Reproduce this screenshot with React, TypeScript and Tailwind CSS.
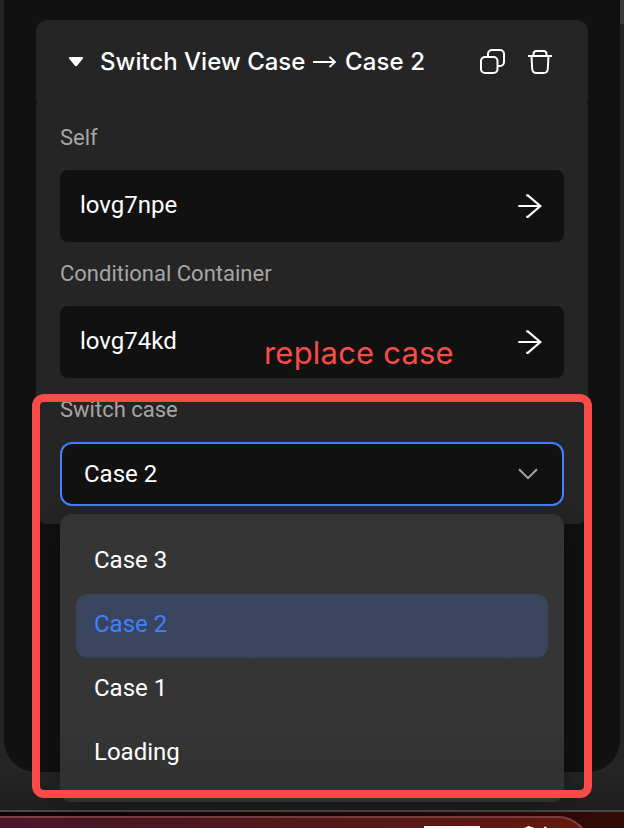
import type { ReactNode } from "react";

function ArrowRight() {
  return (
    <svg width="26" height="26" viewBox="0 0 26 26" fill="none" stroke="#fff" strokeWidth="2.2" strokeLinejoin="miter">
      <path d="M1.300 13H23.300M9.300 2.400H10.800L23.300 13 10.800 23.900H9.300" />
    </svg>
  );
}

function CopyIcon() {
  return (
    <svg className="-mt-px" width="25" height="25" viewBox="0 0 25 25" fill="none" stroke="#fff" strokeWidth="2">
      <rect x="1" y="8" width="16.500" height="16" rx="4" />
      <path d="M8 8V5A4 4 0 0 1 12 1H20A4 4 0 0 1 24 5V13A4 4 0 0 1 20 17H17.500" />
    </svg>
  );
}

function TrashIcon() {
  return (
    <svg width="24" height="24" viewBox="0 0 24 24" fill="none" stroke="#fff" strokeWidth="2">
      <path d="M0 6H24M5.500 6V4Q5.500 1 8.500 1H15.500Q18.500 1 18.500 4V6" />
      <path d="M3.500 6L4.200 19Q4.500 23 8.500 23H15.500Q19.500 23 19.800 19L20.500 6" />
    </svg>
  );
}

function Field({ label, children }: { label: string; children: ReactNode }) {
  return (
    <div className="h-[136px]">
      <div className="h-[50px] text-[22px] leading-[36px] text-[#a6a6a6]">{label}</div>
      {children}
    </div>
  );
}

function LinkInput({ value }: { value: string }) {
  return (
    <div className="flex h-[72px] items-center justify-between rounded-lg bg-[#111] pl-5 pr-[21px] text-[24px] text-white">
      <span className="-mt-[2px]">{value}</span>
      <ArrowRight />
    </div>
  );
}

const options = ["Case 3", "Case 2", "Case 1", "Loading"];

export default function App() {
  return (
    <div className="relative flex h-[828px] w-[624px] flex-col overflow-hidden bg-[#252525] font-[Roboto,sans-serif]">
      <div className="absolute right-0 top-0 h-6 w-1 bg-[#3b3b3b]" />
      <div className="mx-1 h-[772px] shrink-0 rounded-b-[32px] bg-[#111] px-8 pt-5">
        <section className="h-[504px] rounded-xl bg-[#252525]">
          <header className="relative flex h-[84px] items-center pl-8 pr-9 font-[Inter,sans-serif] text-[24px] font-medium text-white">
            <span className="absolute bottom-0 left-0 h-[2px] w-[2px] rounded-tr-full bg-[#161616]" />
            <span className="absolute bottom-0 right-0 h-[2px] w-[2px] rounded-tl-full bg-[#161616]" />
            <svg width="16" height="12" viewBox="0 0 16 12" fill="#fff">
              <path d="M2 1H14Q16 1 14.800 2.800L9.300 9.500Q8 11 6.700 9.500L1.200 2.800Q0 1 2 1Z" />
            </svg>
            <h1 className="ml-4 flex w-[330px] items-center whitespace-nowrap">
              <span className="w-[213px]">Switch View Case</span>
              <svg width="24" height="14" viewBox="0 0 24 14" fill="none" stroke="#fff" strokeWidth="1.8">
                <path d="M0 7H22M16.500 1.800L22 7 16.500 12.200" />
              </svg>
              <span className="ml-2 tracking-[0.1px]">Case 2</span>
            </h1>
            <div className="ml-auto flex items-center gap-[23px]">
              <CopyIcon />
              <TrashIcon />
            </div>
          </header>
          <div className="px-6 pt-4">
            <Field label="Self"><LinkInput value="lovg7npe" /></Field>
            <Field label="Conditional Container"><LinkInput value="lovg74kd" /></Field>
            <Field label="Switch case">
              <div className="flex h-16 items-center justify-between rounded-xl border-2 border-[#4080ff] bg-[#111] pl-[22px] pr-6 text-[24px] text-white">
                <span>Case 2</span>
                <svg width="20" height="12" viewBox="0 0 20 12" fill="none" stroke="#a6a6a6" strokeWidth="2">
                  <path d="M1 1.300L10 10.200 19 1.300" />
                </svg>
              </div>
            </Field>
          </div>
        </section>
      </div>
      <div className="h-[38px] shrink-0 bg-linear-to-b from-[#242424] to-[#1e1e1e]" />
      <div className="h-[2px] shrink-0 bg-[#4b4b4b]" />
      <div className="h-4 shrink-0 bg-linear-to-r from-[#100006] to-[#320b05] pt-1">
        <div className="relative h-8 w-[590px] rounded-tr-[32px] border-r-2 border-t-2 border-[#814040] bg-linear-to-r from-[#47152c] via-[#561a1a] to-[#68190d]">
          <div className="absolute left-[424px] top-2 h-3 w-14 bg-white" />
          <svg className="absolute left-[521px] top-2" width="32" height="4" viewBox="0 0 32 4" fill="#fff">
            <path d="M0 4Q4 1 6 1Q7-1 10 1Q13 1 15 4ZM23 4V1Q25-1 27 4Z" />
          </svg>
        </div>
      </div>
      <ul className="absolute left-[60px] top-[514px] h-[288px] w-[504px] rounded-xl bg-linear-to-b from-[#353535] from-70% to-[#303030] p-4 shadow-[0_8px_28px_rgba(0,0,0,0.28)]">
        {options.map((option) => (
          <li
            key={option}
            className={option === "Case 2"
              ? "flex h-16 items-center rounded-xl bg-[#39445e] px-[18px] pb-1 text-[24px] text-[#4080ff]"
              : "flex h-16 items-center px-[18px] pb-1 text-[24px] text-white"}
          >
            {option}
          </li>
        ))}
      </ul>
      <div className="absolute left-[32px] top-[394px] h-[404px] w-[560px] rounded-xl border-8 border-[#f94b48]" />
      <div className="absolute left-[264px] top-[333px] whitespace-nowrap font-[Inter,sans-serif] text-[31px] leading-[40px] tracking-[0.2px] text-[#f94b48] [font-variation-settings:'wght'_450]">replace case</div>
    </div>
  );
}
